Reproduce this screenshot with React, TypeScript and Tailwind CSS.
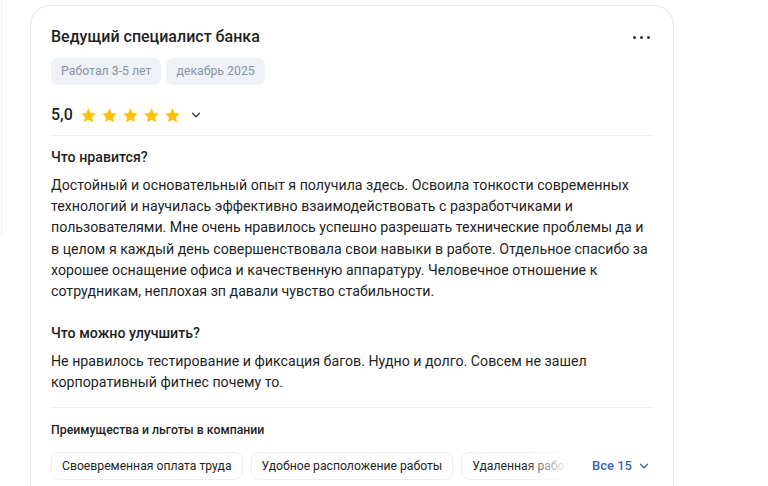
import { ChevronDown } from 'lucide-react';

const likes =
  'Достойный и основательный опыт я получила здесь. Освоила тонкости современных технологий и научилась эффективно взаимодействовать с разработчиками и пользователями. Мне очень нравилось успешно разрешать технические проблемы да и в целом я каждый день совершенствовала свои навыки в работе. Отдельное спасибо за хорошее оснащение офиса и качественную аппаратуру. Человечное отношение к сотрудникам, неплохая зп давали чувство стабильности.';

const improve =
  'Не нравилось тестирование и фиксация багов. Нудно и долго. Совсем не зашел корпоративный фитнес почему то.';

const perks = ['Своевременная оплата труда', 'Удобное расположение работы', 'Удаленная работа', 'ДМС'];

function Star() {
  return (
    <svg width="17" height="17" viewBox="0 0 24 24" className="shrink-0">
      <path
        d="M12 1.8l3.1 6.6 7.2.9-5.3 5 1.4 7.1L12 17.9l-6.4 3.5 1.4-7.1-5.3-5 7.2-.9z"
        fill="#ffc107"
      />
    </svg>
  );
}

export default function App() {
  return (
    <div className="flex min-h-screen bg-white text-[#1f1f1f]" style={{ fontFamily: 'Roboto, "Noto Sans", sans-serif' }}>
      <div className="w-[30px] shrink-0">
        <div className="h-[235px] w-[2px] border-r border-[#f1f2f5]" />
      </div>

      <div className="mt-[5px] w-[644px] shrink-0 rounded-t-[20px] border border-b-0 border-[#e6e8ee] px-[20px] pt-[19px]">
        {/* Header */}
        <div className="flex items-center justify-between">
          <h1 className="text-[16px] font-medium leading-[24px]">Ведущий специалист банка</h1>
          <button className="mr-[3px] flex h-[24px] items-center gap-[4px]">
            <span className="h-[3px] w-[3px] rounded-full bg-[#2b2f36]" />
            <span className="h-[3px] w-[3px] rounded-full bg-[#2b2f36]" />
            <span className="h-[3px] w-[3px] rounded-full bg-[#2b2f36]" />
          </button>
        </div>

        <div className="mt-[9px] flex gap-[5px]">
          <span className="rounded-[7px] bg-[#eef1f6] px-[10px] py-[5px] text-[12.3px] leading-[17px] text-[#8b93a3]">
            Работал 3-5 лет
          </span>
          <span className="rounded-[7px] bg-[#eef1f6] px-[10px] py-[5px] text-[12.3px] leading-[17px] text-[#8b93a3]">
            декабрь 2025
          </span>
        </div>

        {/* Rating */}
        <div className="mt-[18px] flex h-[24px] items-center">
          <span className="text-[16px] font-medium">5,0</span>
          <div className="ml-[7px] flex items-center gap-[4px]">
            <Star />
            <Star />
            <Star />
            <Star />
            <Star />
          </div>
          <ChevronDown className="ml-[8px] h-[14px] w-[14px] text-[#3a3f47]" strokeWidth={2.2} />
        </div>

        <div className="mt-[8px] h-px bg-[#eef0f4]" />

        <h3 className="mt-[11px] text-[14.2px] font-medium leading-[20px]">Что нравится?</h3>
        <p className="mt-[8px] text-[14.2px] leading-[21.2px]">{likes}</p>

        <h3 className="mt-[21px] text-[14.2px] font-medium leading-[20px]">Что можно улучшить?</h3>
        <p className="mt-[8px] text-[14.2px] leading-[21px]">{improve}</p>

        <div className="mt-[14px] h-px bg-[#eef0f4]" />

        <h4 className="mt-[13px] text-[12.3px] font-medium leading-[18px]">Преимущества и льготы в компании</h4>

        <div className="mt-[13px] flex items-center">
          <div className="relative flex min-w-0 flex-1 gap-[8px] overflow-hidden">
            {perks.map((p) => (
              <span
                key={p}
                className="shrink-0 rounded-[8px] border border-[#eceef2] px-[10px] py-[4px] text-[12.2px] leading-[18px]"
              >
                {p}
              </span>
            ))}
            <div className="pointer-events-none absolute inset-y-0 right-0 w-[45px] bg-gradient-to-r from-transparent to-white" />
          </div>
          <button className="ml-[24px] mr-[2px] flex items-center gap-[5px] text-[13px] font-medium text-[#3c64b4]">
            Все 15
            <ChevronDown className="h-[14px] w-[14px]" strokeWidth={2.2} />
          </button>
        </div>
      </div>
    </div>
  );
}
